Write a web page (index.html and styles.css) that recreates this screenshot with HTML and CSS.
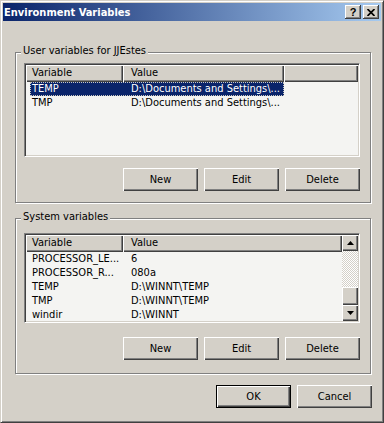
FILE: index.html
```html
<!DOCTYPE html>
<html lang="en">
<head>
    <meta charset="UTF-8">
    <title>Environment Variables</title>
    <link rel="stylesheet" href="styles.css">
</head>
<body>
    <div class="window">
        <div class="titlebar">
            <span class="title">Environment Variables</span>
            <div class="title-buttons">
                <span class="tbtn help">?</span>
                <span class="tbtn close">
                    <svg width="8" height="7" viewBox="0 0 8 7"><path d="M0.5 0 L7.5 7 M7.5 0 L0.5 7" stroke="#000" stroke-width="1.7"/></svg>
                </span>
            </div>
        </div>

        <div class="content">
            <!-- User variables -->
            <fieldset class="group user-group">
                <legend>User variables for JJEstes</legend>
                <div class="listview user-list">
                    <div class="list-main">
                        <div class="header">
                            <div class="hcell col-var">Variable</div>
                            <div class="hcell col-val">Value</div>
                            <div class="hcell filler"></div>
                        </div>
                        <div class="rows">
                            <div class="row selected">
                                <div class="item"><span class="cell col-var">TEMP</span><span class="cell col-val">D:\Documents and Settings\...</span></div>
                            </div>
                            <div class="row">
                                <div class="item"><span class="cell col-var">TMP</span><span class="cell col-val">D:\Documents and Settings\...</span></div>
                            </div>
                        </div>
                    </div>
                </div>
                <div class="button-row">
                    <button class="btn">New</button>
                    <button class="btn">Edit</button>
                    <button class="btn">Delete</button>
                </div>
            </fieldset>

            <!-- System variables -->
            <fieldset class="group system-group">
                <legend>System variables</legend>
                <div class="listview system-list">
                    <div class="list-main">
                        <div class="header">
                            <div class="hcell col-var">Variable</div>
                            <div class="hcell col-val wide">Value</div>
                        </div>
                        <div class="rows">
                            <div class="row">
                                <div class="item"><span class="cell col-var">PROCESSOR_LE...</span><span class="cell col-val">6</span></div>
                            </div>
                            <div class="row">
                                <div class="item"><span class="cell col-var">PROCESSOR_R...</span><span class="cell col-val">080a</span></div>
                            </div>
                            <div class="row">
                                <div class="item"><span class="cell col-var">TEMP</span><span class="cell col-val">D:\WINNT\TEMP</span></div>
                            </div>
                            <div class="row">
                                <div class="item"><span class="cell col-var">TMP</span><span class="cell col-val">D:\WINNT\TEMP</span></div>
                            </div>
                            <div class="row">
                                <div class="item"><span class="cell col-var">windir</span><span class="cell col-val">D:\WINNT</span></div>
                            </div>
                        </div>
                    </div>
                    <div class="scrollbar">
                        <span class="sbtn"><svg width="7" height="4" viewBox="0 0 7 4"><polygon points="3.5,0 7,4 0,4" fill="#000"/></svg></span>
                        <span class="track"></span>
                        <span class="thumb"></span>
                        <span class="sbtn"><svg width="7" height="4" viewBox="0 0 7 4"><polygon points="0,0 7,0 3.5,4" fill="#000"/></svg></span>
                    </div>
                </div>
                <div class="button-row">
                    <button class="btn">New</button>
                    <button class="btn">Edit</button>
                    <button class="btn">Delete</button>
                </div>
            </fieldset>

            <div class="dialog-buttons">
                <button class="btn default">OK</button>
                <button class="btn">Cancel</button>
            </div>
        </div>
    </div>
</body>
</html>
```

FILE: styles.css
```css
html {
    font-size: 11px;
}

body {
    margin: 0;
    font-family: "DejaVu Sans Condensed", "DejaVu Sans", sans-serif;
    font-stretch: condensed;
    font-size: 11px;
    color: #000;
    background-color: #d4d0c8;
}

.window {
    width: 384px;
    height: 423px;
    box-sizing: border-box;
    background-color: #d4d0c8;
    border: 1px solid;
    border-color: #d4d0c8 #404040 #404040 #d4d0c8;
    box-shadow: inset 1px 1px #fff, inset -1px -1px #808080;
    padding: 2px;
    display: flex;
    flex-direction: column;
}

/* Title bar */
.titlebar {
    height: 18px;
    display: flex;
    justify-content: space-between;
    align-items: center;
    background: linear-gradient(to right, #0a246a, #a6caf0);
    padding: 0 2px 0 1px;
}

.title {
    color: #fff;
    font-weight: bold;
    font-size: 11px;
}

.title-buttons {
    display: flex;
    gap: 2px;
}

.tbtn {
    width: 16px;
    height: 14px;
    box-sizing: border-box;
    display: flex;
    justify-content: center;
    align-items: center;
    background-color: #d4d0c8;
    box-shadow: inset -1px -1px #404040, inset 1px 1px #fff, inset -2px -2px #808080;
    font-family: "Liberation Sans", Arial, sans-serif;
    font-weight: bold;
    font-size: 11px;
    line-height: 1;
}

/* Content */
.content {
    padding: 23px 10px 0 12px;
}

.group {
    margin: 0;
    border: 1px solid #808080;
    box-shadow: inset 1px 1px #fff, 1px 1px #fff;
    padding: 2px 10px 11px 8px;
}

.group legend {
    margin-left: -3px;
    padding: 0 2px 4px 2px;
    line-height: 13px;
    background-color: #d4d0c8;
}

.system-group {
    margin-top: 7px;
    padding-top: 6px;
    padding-bottom: 13px;
}

/* List views */
.listview {
    display: flex;
    background-color: #f4f4f2;
    border: 1px solid;
    border-color: #808080 #fff #fff #808080;
    box-shadow: inset 1px 1px #404040, inset -1px -1px #d4d0c8;
    padding: 1px;
}

.user-list {
    height: 94px;
    box-sizing: border-box;
}

.system-list {
    height: 90px;
    box-sizing: border-box;
}

.list-main {
    flex: 1;
    overflow: hidden;
}

.header {
    display: flex;
    height: 17px;
}

.hcell {
    box-sizing: border-box;
    height: 17px;
    line-height: 16px;
    padding-left: 6px;
    background-color: #d4d0c8;
    box-shadow: inset 1px 1px #fff, inset -1px -1px #404040, inset -2px -2px #808080;
}

.hcell.col-var {
    width: 97px;
}

.hcell.col-val {
    width: 161px;
    padding-left: 8px;
}

.hcell.col-val.wide,
.hcell.filler {
    flex: 1;
}

.row {
    height: 14px;
    padding-left: 4px;
}

.item {
    display: flex;
    width: 254px;
    height: 14px;
    line-height: 14px;
    box-sizing: border-box;
}

.cell {
    white-space: nowrap;
    overflow: hidden;
}

.cell.col-var {
    width: 93px;
    padding-left: 2px;
    box-sizing: border-box;
}

.cell.col-val {
    width: 161px;
    padding-left: 8px;
    box-sizing: border-box;
}

.row.selected .item {
    background-color: #0a246a;
    color: #fff;
    outline: 1px dotted #c8c8c0;
    outline-offset: -1px;
}

/* Scrollbar */
.scrollbar {
    width: 16px;
    display: flex;
    flex-direction: column;
}

.sbtn, .thumb {
    height: 16px;
    box-sizing: border-box;
    display: flex;
    justify-content: center;
    align-items: center;
    background-color: #d4d0c8;
    box-shadow: inset 1px 1px #fff, inset -1px -1px #404040, inset -2px -2px #808080;
}

.thumb {
    height: 18px;
}

.track {
    flex: 1;
    background-color: #fff;
    background-image: conic-gradient(#d4d0c8 25%, #fff 0 50%, #d4d0c8 0 75%, #fff 0);
    background-size: 2px 2px;
}

/* Buttons */
.button-row, .dialog-buttons {
    display: flex;
    justify-content: flex-end;
    gap: 6px;
}

.user-group .button-row {
    margin-top: 11px;
}

.system-group .button-row {
    margin-top: 14px;
}

.dialog-buttons {
    margin-top: 11px;
    margin-right: -1px;
}

.btn {
    width: 75px;
    height: 23px;
    margin: 0;
    padding: 0;
    border: none;
    font-family: "DejaVu Sans Condensed", "DejaVu Sans", sans-serif;
    font-stretch: condensed;
    font-size: 11px;
    color: #000;
    background-color: #d4d0c8;
    box-shadow: inset 1px 1px #fff, inset -1px -1px #404040, inset -2px -2px #808080;
}

.btn.default {
    border: 1px solid #000;
}
```
